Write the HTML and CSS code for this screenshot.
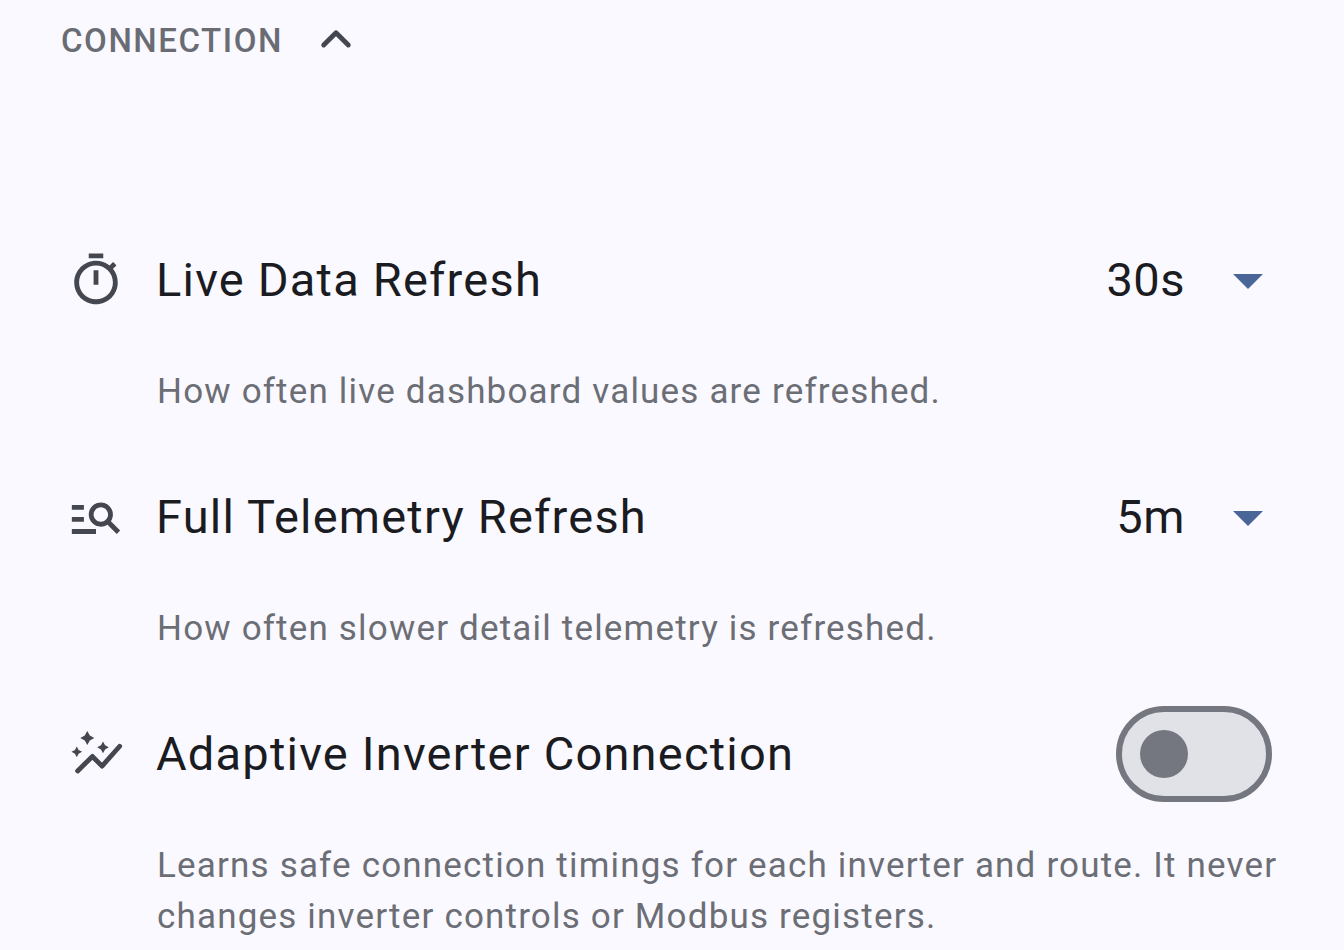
FILE: index.html
```html
<!DOCTYPE html>
<html lang="en">
<head>
    <meta charset="UTF-8">
    <title>Connection settings</title>
    <link rel="stylesheet" href="styles.css">
</head>
<body>
    <section class="section">
        <div class="section-header">
            <span class="section-title">CONNECTION</span>
            <svg class="chevron" viewBox="0 0 24 24"><polyline points="6.9,14.5 12,9.4 17.1,14.5"/></svg>
        </div>

        <div class="setting">
            <div class="setting-row">
                <svg class="setting-icon" viewBox="0 0 24 24"><path d="M9 1h6v2H9z M19.03 7.39l1.42-1.42c-.43-.51-.9-.99-1.41-1.41l-1.42 1.42C16.07 4.74 14.12 4 12 4c-4.97 0-9 4.03-9 9s4.02 9 9 9 9-4.03 9-9c0-2.12-.74-4.07-1.97-5.61zM12 20c-3.87 0-7-3.13-7-7s3.13-7 7-7 7 3.13 7 7-3.13 7-7 7z M11 8h2v6h-2z"/></svg>
                <span class="setting-title">Live Data Refresh</span>
                <span class="setting-value">30s</span>
                <span class="dropdown-arrow"></span>
            </div>
            <p class="setting-desc">How often live dashboard values are refreshed.</p>
        </div>

        <div class="setting">
            <div class="setting-row">
                <svg class="setting-icon" viewBox="0 0 24 24"><path d="M7 9H2V7h5v2zm0 3H2v2h5v-2zm13.59 7l-3.83-3.83c-.8.52-1.74.83-2.76.83-2.76 0-5-2.24-5-5s2.24-5 5-5 5 2.24 5 5c0 1.02-.31 1.96-.83 2.75L22 17.59 20.59 19zM17 11c0-1.65-1.35-3-3-3s-3 1.35-3 3 1.35 3 3 3 3-1.35 3-3zM2 19h10v-2H2v2z"/></svg>
                <span class="setting-title">Full Telemetry Refresh</span>
                <span class="setting-value">5m</span>
                <span class="dropdown-arrow"></span>
            </div>
            <p class="setting-desc">How often slower detail telemetry is refreshed.</p>
        </div>

        <div class="setting">
            <div class="setting-row">
                <svg class="setting-icon" viewBox="0 0 24 24"><path d="M4.05 8.9l.75 1.45 1.45.75-1.45.75-.75 1.45-.75-1.45-1.45-.75 1.45-.75z M8.4 2.5l1.05 1.85 1.85 1.05-1.85 1.05L8.4 8.3 7.35 6.45 5.5 5.4l1.85-1.05z M14.9 6.85l.85 1.55 1.55.85-1.55.85-.85 1.55-.85-1.55-1.55-.85 1.55-.85z"/><polyline class="graph-line" points="4.4,19 10.5,13 14.5,17 21.8,8.8"/></svg>
                <span class="setting-title">Adaptive Inverter Connection</span>
                <span class="toggle"><span class="toggle-thumb"></span></span>
            </div>
            <p class="setting-desc">Learns safe connection timings for each inverter and route. It never changes inverter controls or Modbus registers.</p>
        </div>
    </section>
</body>
</html>
```

FILE: styles.css
```css
html, body {
    height: 100%;
    margin: 0;
    overflow: hidden;
}

body {
    background-color: #faf9ff;
    font-family: Roboto, sans-serif;
}

.section {
    padding: 16px 64px 0 61px;
}

.section-header {
    display: flex;
    align-items: center;
    height: 48px;
    margin-bottom: 168px;
}

.section-title {
    color: #6a6c74;
    font-size: 33px;
    font-weight: 500;
    letter-spacing: 1.55px;
}

.chevron {
    width: 58px;
    height: 58px;
    margin-left: 24px;
    margin-bottom: 2px;
}

.chevron polyline {
    fill: none;
    stroke: #44474f;
    stroke-width: 2;
    stroke-linecap: round;
    stroke-linejoin: round;
}

.setting {
    margin-bottom: 52px;
}

.setting-row {
    display: flex;
    align-items: center;
    height: 96px;
}

.setting-icon {
    width: 58px;
    height: 58px;
    margin-left: 6px;
    margin-right: 31px;
    fill: #44474f;
    flex-shrink: 0;
}

.graph-line {
    fill: none;
    stroke: #44474f;
    stroke-width: 2;
    stroke-linecap: round;
    stroke-linejoin: round;
}

.setting-title {
    flex: 1;
    color: #1a1c22;
    font-size: 47px;
    letter-spacing: 1.2px;
    padding-bottom: 1px;
}

.setting-value {
    color: #1a1c22;
    font-size: 47px;
    letter-spacing: 0.5px;
    margin-right: 48px;
    padding-bottom: 1px;
}

.dropdown-arrow {
    width: 0;
    height: 0;
    margin-top: 2px;
    margin-right: 17px;
    border-left: 15px solid transparent;
    border-right: 15px solid transparent;
    border-top: 15px solid #4a6598;
}

.setting-desc {
    margin: 38px -10px 0 96px;
    color: #6c6e76;
    font-size: 35px;
    line-height: 51px;
    letter-spacing: 1.18px;
}

.toggle {
    display: flex;
    align-items: center;
    box-sizing: border-box;
    width: 156px;
    height: 96px;
    margin-right: 8px;
    padding-left: 18px;
    background-color: #e1e2e7;
    border: 6px solid #74777f;
    border-radius: 48px;
}

.toggle-thumb {
    width: 48px;
    height: 48px;
    background-color: #74777f;
    border-radius: 50%;
}
```
